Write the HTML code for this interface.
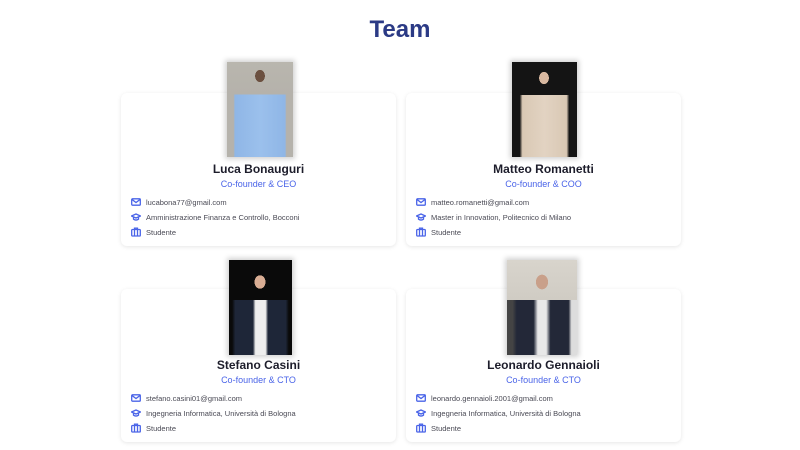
<!DOCTYPE html>
<html><head><meta charset="utf-8"><style>
*{margin:0;padding:0;box-sizing:border-box}
body{width:800px;height:450px;background:#fff;font-family:"Liberation Sans",sans-serif;position:relative;overflow:hidden}
h1{position:absolute;top:16px;left:0;width:800px;text-align:center;font-size:24px;font-weight:bold;color:#2b3a85}
.card{position:absolute;width:275px;height:153px;background:#fff;border-radius:6px;box-shadow:0 1px 4px rgba(0,0,0,.10)}
.photo{position:absolute;box-shadow:0 0 5px 2px rgba(0,0,0,.18)}
.name{position:absolute;width:275px;text-align:center;font-size:12px;font-weight:bold;color:#1d1d2b}
.role{position:absolute;width:275px;text-align:center;font-size:9px;color:#4a64e8}
.row{position:absolute;left:10px;font-size:7.5px;color:#4a4a55;display:flex;align-items:center}
.row svg{width:10px;height:10px;margin-right:5px;stroke:#4a64e8;fill:none;stroke-width:1.3}
</style></head><body>
<h1>Team</h1>

<div class="card" style="left:121px;top:93px"></div>
<div class="card" style="left:406px;top:93px"></div>
<div class="card" style="left:121px;top:289px"></div>
<div class="card" style="left:406px;top:289px"></div>

<div class="photo" style="left:227px;top:62px;width:66px;height:95px;background:radial-gradient(ellipse 8px 10px at 33px 14px,#6b5040 60%,transparent 62%),linear-gradient(180deg,#b9b6ae 0%,#b5b2ab 34%,transparent 34%),linear-gradient(90deg,#b5b2ab 10%,#8fb6e6 12%,#9bc0ec 50%,#8fb6e6 88%,#b5b2ab 90%)"></div>
<div class="photo" style="left:512px;top:62px;width:65px;height:95px;background:radial-gradient(ellipse 8px 10px at 32px 16px,#d8b8a0 60%,transparent 62%),linear-gradient(180deg,#141414 0%,#141414 35%,transparent 35%),linear-gradient(90deg,#141414 12%,#d9c8b4 16%,#e2d3c2 50%,#d9c8b4 84%,#141414 88%)"></div>
<div class="photo" style="left:229px;top:260px;width:63px;height:95px;background:radial-gradient(ellipse 9px 11px at 31px 22px,#d9ad94 60%,transparent 62%),linear-gradient(180deg,#0a0a0a 0%,#0a0a0a 42%,transparent 42%),linear-gradient(90deg,#0a0a0a 5%,#1e2638 10%,#1e2638 38%,#eee 42%,#eee 58%,#1e2638 62%,#1e2638 90%,#0a0a0a 95%)"></div>
<div class="photo" style="left:507px;top:260px;width:70px;height:95px;background:radial-gradient(ellipse 10px 12px at 35px 22px,#c9a08a 60%,transparent 62%),linear-gradient(180deg,#d8d4cc 0%,#d0ccc4 42%,transparent 42%),linear-gradient(90deg,#444 8%,#232838 14%,#232838 38%,#e8e8e8 44%,#e8e8e8 56%,#232838 62%,#232838 88%,#ddd 92%)"></div>

<div style="position:absolute;left:121px;top:0">
<div class="name" style="top:162px">Luca Bonauguri</div>
<div class="role" style="top:179px">Co-founder &amp; CEO</div>
</div>
<div style="position:absolute;left:406px;top:0">
<div class="name" style="top:162px">Matteo Romanetti</div>
<div class="role" style="top:179px">Co-founder &amp; COO</div>
</div>
<div style="position:absolute;left:121px;top:0">
<div class="name" style="top:358px">Stefano Casini</div>
<div class="role" style="top:375px">Co-founder &amp; CTO</div>
</div>
<div style="position:absolute;left:406px;top:0">
<div class="name" style="top:358px">Leonardo Gennaioli</div>
<div class="role" style="top:375px">Co-founder &amp; CTO</div>
</div>

<div class="row" style="left:131px;top:197px"><svg viewBox="0 0 10 10"><rect x="0.7" y="1.8" width="8.6" height="6.4" rx="0.8"/><path d="M1 2.5 5 5.5 9 2.5"/></svg>lucabona77@gmail.com</div>
<div class="row" style="left:131px;top:212px"><svg viewBox="0 0 10 10"><path d="M0.5 4 5 2 9.5 4 5 6Z"/><path d="M2.5 5v2.2c1.5 1 3.5 1 5 0V5"/></svg>Amministrazione Finanza e Controllo, Bocconi</div>
<div class="row" style="left:131px;top:227px"><svg viewBox="0 0 10 10"><rect x="0.7" y="2.5" width="8.6" height="6.5" rx="0.8"/><path d="M3.5 2.5V1.2h3v1.3M3.5 2.5V9M6.5 2.5V9"/></svg>Studente</div>

<div class="row" style="left:416px;top:197px"><svg viewBox="0 0 10 10"><rect x="0.7" y="1.8" width="8.6" height="6.4" rx="0.8"/><path d="M1 2.5 5 5.5 9 2.5"/></svg>matteo.romanetti@gmail.com</div>
<div class="row" style="left:416px;top:212px"><svg viewBox="0 0 10 10"><path d="M0.5 4 5 2 9.5 4 5 6Z"/><path d="M2.5 5v2.2c1.5 1 3.5 1 5 0V5"/></svg>Master in Innovation, Politecnico di Milano</div>
<div class="row" style="left:416px;top:227px"><svg viewBox="0 0 10 10"><rect x="0.7" y="2.5" width="8.6" height="6.5" rx="0.8"/><path d="M3.5 2.5V1.2h3v1.3M3.5 2.5V9M6.5 2.5V9"/></svg>Studente</div>

<div class="row" style="left:131px;top:393px"><svg viewBox="0 0 10 10"><rect x="0.7" y="1.8" width="8.6" height="6.4" rx="0.8"/><path d="M1 2.5 5 5.5 9 2.5"/></svg>stefano.casini01@gmail.com</div>
<div class="row" style="left:131px;top:408px"><svg viewBox="0 0 10 10"><path d="M0.5 4 5 2 9.5 4 5 6Z"/><path d="M2.5 5v2.2c1.5 1 3.5 1 5 0V5"/></svg>Ingegneria Informatica, Università di Bologna</div>
<div class="row" style="left:131px;top:423px"><svg viewBox="0 0 10 10"><rect x="0.7" y="2.5" width="8.6" height="6.5" rx="0.8"/><path d="M3.5 2.5V1.2h3v1.3M3.5 2.5V9M6.5 2.5V9"/></svg>Studente</div>

<div class="row" style="left:416px;top:393px"><svg viewBox="0 0 10 10"><rect x="0.7" y="1.8" width="8.6" height="6.4" rx="0.8"/><path d="M1 2.5 5 5.5 9 2.5"/></svg>leonardo.gennaioli.2001@gmail.com</div>
<div class="row" style="left:416px;top:408px"><svg viewBox="0 0 10 10"><path d="M0.5 4 5 2 9.5 4 5 6Z"/><path d="M2.5 5v2.2c1.5 1 3.5 1 5 0V5"/></svg>Ingegneria Informatica, Università di Bologna</div>
<div class="row" style="left:416px;top:423px"><svg viewBox="0 0 10 10"><rect x="0.7" y="2.5" width="8.6" height="6.5" rx="0.8"/><path d="M3.5 2.5V1.2h3v1.3M3.5 2.5V9M6.5 2.5V9"/></svg>Studente</div>
</body></html>
